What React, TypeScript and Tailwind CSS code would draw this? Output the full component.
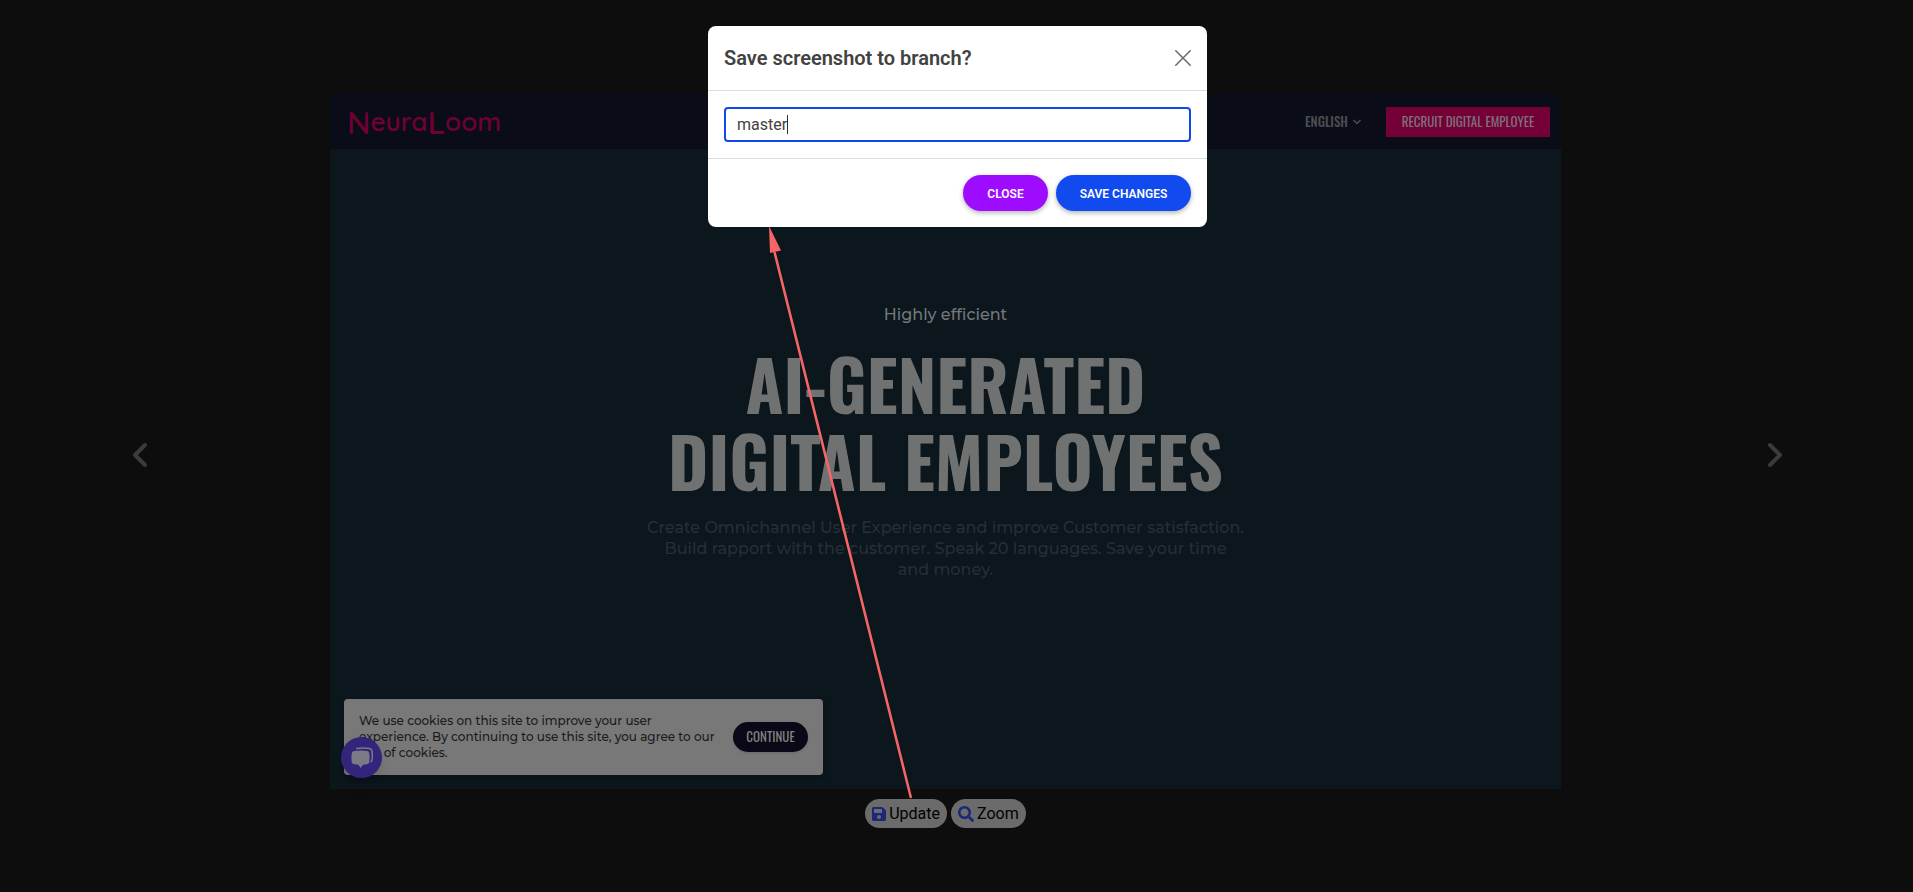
import { useState } from "react";

const montserrat = "font-[Montserrat,Inter,sans-serif]";
const oswald = "font-[Oswald,'Roboto_Condensed','Liberation_Sans_Narrow','Liberation_Sans',sans-serif]";

function Logo() {
  return (
    <a
      href="#home"
      aria-label="NeuraLoom"
      className="flex items-center font-[Quicksand,Comfortaa,Lato,sans-serif] text-[26px] leading-8 font-semibold text-[#6f0035]"
    >
      <span className="text-[32px]">N</span>
      <span>eura</span>
      <span className="text-[32px]">L</span>
      <span>oom</span>
    </a>
  );
}

function SiteHeader() {
  return (
    <header className="flex h-[55px] items-center justify-between bg-[#0a0d17] pr-[11px] pl-[17px]">
      <Logo />
      <div className={`flex items-center gap-6 text-[13px] ${oswald}`}>
        <button type="button" className="flex items-center gap-1 font-medium text-[#4b4c51]">
          ENGLISH
          <svg viewBox="0 0 10 10" className="size-[10px]" fill="none" stroke="currentColor" strokeWidth="1.5">
            <path d="M1.5 3l3.5 3.5L8.500 3" />
          </svg>
        </button>
        <button type="button" className="h-[30px] w-[164px] bg-[#730037] whitespace-nowrap text-[#80707a]">
          RECRUIT DIGITAL EMPLOYEE
        </button>
      </div>
    </header>
  );
}

function CookieNotice() {
  return (
    <div className="relative mb-[14px] ml-[14px] w-[479px]">
      <div className="flex h-[76px] items-center justify-between rounded bg-[#787878] pr-[15px] pl-[15px] shadow-md">
        <p className={`w-[362px] text-[12px] leading-4 font-medium text-[#1a1a1a] ${montserrat}`}>
          We use cookies on this site to improve your user experience. By continuing to use this site, you agree to our
          use of cookies.
        </p>
        <button
          type="button"
          className={`h-[30px] w-[75px] rounded-full bg-[#0a0817] text-[13px] text-[#828282] shadow ${oswald}`}
        >
          CONTINUE
        </button>
      </div>
      <button
        type="button"
        aria-label="Open chat"
        className="absolute -bottom-[3px] -left-[3px] flex size-[41px] items-center justify-center rounded-full bg-[#33247c] shadow-lg"
      >
        <svg viewBox="0 0 24 22" className="h-[22px] w-[24px]">
          <path d="M6 1.500Q14 .5 19.500 1.500Q21.500 2 22 4Q22.700 9 22 13Q21.500 14.500 20.500 15" fill="none" stroke="#7c7a86" strokeWidth="1.500" />
          <path d="M4 4Q11 3 17 4Q19 4.400 19.300 6.500Q19.800 11 19.300 15Q19 17 17 17.300L13 17.700L10.500 21L8.500 17.700L4 17.300Q2 17 1.700 15Q1.200 11 1.700 6.500Q2 4.400 4 4Z" fill="#7c7a86" />
        </svg>
      </button>
    </div>
  );
}

function SitePreview() {
  return (
    <article className="flex aspect-[1231/695] flex-col bg-[#0c161d]">
      <SiteHeader />
      <div className="flex flex-1 flex-col items-center pt-[154px] text-center">
        <p className={`text-base font-medium text-[#74787b] ${montserrat}`}>Highly efficient</p>
        <h1 className={`mt-[18px] text-[69px] leading-[77px] font-bold text-[#707272] ${oswald}`}>
          AI-GENERATED
          <br />
          DIGITAL EMPLOYEES
        </h1>
        <p className={`mt-[18px] w-[620px] text-base leading-[21px] font-medium text-[#252f36] ${montserrat}`}>
          Create Omnichannel User Experience and improve Customer satisfaction. Build rapport with the customer. Speak
          20 languages. Save your time
          <br />
          and money.
        </p>
      </div>
      <CookieNotice />
    </article>
  );
}

function Toolbar() {
  const style =
    "flex h-[29px] items-center gap-[3px] rounded-full bg-[#6b6b6b] px-[7px] font-[Roboto,sans-serif] text-base text-black";
  return (
    <div className="mt-[10px] flex justify-center gap-1">
      <button type="button" className={style}>
        <svg viewBox="0 0 448 512" className="h-4 w-[14px]" fill="#1b2877">
          <path d="M433.900 129.900l-83.900-83.900A48 48 0 0 0 316.100 32H48C21.500 32 0 53.500 0 80v352c0 26.500 21.500 48 48 48h352c26.500 0 48-21.500 48-48V163.900a48 48 0 0 0-14.100-34zM224 416c-35.300 0-64-28.700-64-64s28.700-64 64-64 64 28.700 64 64-28.700 64-64 64zm96-304.500V212c0 6.600-5.400 12-12 12H76c-6.600 0-12-5.400-12-12V108c0-6.600 5.400-12 12-12h228.500c3.200 0 6.200 1.300 8.500 3.500l3.500 3.500a12 12 0 0 1 3.500 8.500z" />
        </svg>
        Update
      </button>
      <button type="button" className={style}>
        <svg viewBox="0 0 512 512" className="size-4" fill="#1b2877">
          <path d="M505 442.700L405.300 343c-4.500-4.500-10.600-7-17-7H372c27.600-35.300 44-79.700 44-128C416 93.100 322.900 0 208 0S0 93.100 0 208s93.100 208 208 208c48.300 0 92.700-16.400 128-44v16.300c0 6.400 2.500 12.500 7 17l99.700 99.700c9.400 9.400 24.600 9.400 33.900 0l28.300-28.300c9.400-9.400 9.400-24.600.1-34zM208 336c-70.700 0-128-57.200-128-128 0-70.700 57.200-128 128-128 70.700 0 128 57.200 128 128 0 70.700-57.200 128-128 128z" />
        </svg>
        Zoom
      </button>
    </div>
  );
}

function SlideButton({ label, path }: { label: string; path: string }) {
  return (
    <button type="button" aria-label={label} className="pb-3">
      <svg viewBox="0 0 16 26" className="h-[26px] w-4" fill="none" stroke="#3b3b3b" strokeWidth="4" strokeLinecap="round" strokeLinejoin="round">
        <path d={path} />
      </svg>
    </button>
  );
}

function SaveDialog() {
  const [branch, setBranch] = useState("master");
  const pill =
    "h-9 rounded-full pt-0.5 text-[12px] font-semibold text-white shadow-[0_2px_5px_rgba(0,0,0,0.3)]";
  return (
    <div className="absolute inset-x-0 top-[26px] flex justify-center pl-0.5">
      <form
        role="dialog"
        aria-labelledby="dialog-title"
        onSubmit={(e) => e.preventDefault()}
        className="w-[499px] rounded-lg bg-white font-[Roboto,sans-serif] text-[#424242]"
      >
        <div className="flex h-[65px] items-center justify-between border-b border-[#dcdcdc] px-4">
          <h2 id="dialog-title" className="text-xl font-semibold">
            <label htmlFor="branch">Save screenshot to branch?</label>
          </h2>
          <button type="button" aria-label="Close dialog">
            <svg viewBox="0 0 16 16" className="size-4" fill="none" stroke="#686868" strokeWidth="1.500" strokeLinecap="round">
              <path d="M.8.8l14.400 14.400M15.200.8L.8 15.200" />
            </svg>
          </button>
        </div>
        <div className="border-b border-[#dcdcdc] p-4">
          <div className="relative flex items-center">
            <input
              id="branch"
              type="text"
              value={branch}
              onChange={(e) => setBranch(e.target.value)}
              className="h-[35px] w-full rounded border-2 border-[#1049ea] px-[11px] text-base outline-none"
            />
            <span aria-hidden="true" className="pointer-events-none absolute left-[63px] h-[19px] w-px bg-[#303030]" />
          </div>
        </div>
        <div className="flex justify-end gap-2 p-4">
          <button type="button" className={`${pill} w-[85px] bg-[#9d0cff]`}>
            CLOSE
          </button>
          <button type="submit" className={`${pill} w-[135px] bg-[#114aee]`}>
            SAVE CHANGES
          </button>
        </div>
      </form>
    </div>
  );
}

function Pointer() {
  return (
    <svg
      viewBox="0 0 150 574"
      aria-hidden="true"
      className="pointer-events-none absolute top-[226px] left-1/2 -ml-[191px] h-[574px] w-[150px]"
    >
      <path d="M8.500 26L145 572" stroke="#f76567" strokeWidth="2.500" />
      <path d="M3 0L4 27L15 24.500Z" fill="#f76567" />
    </svg>
  );
}

export default function App() {
  return (
    <div className="relative min-h-screen bg-[#0d0d0d]">
      <main className="flex items-center justify-between pt-[94px] pr-[130px] pb-8 pl-[132px]">
        <SlideButton label="Previous" path="M13 3L3 13l10 10" />
        <div className="mr-6 w-[1231px] max-w-[75%]">
          <SitePreview />
          <Toolbar />
        </div>
        <SlideButton label="Next" path="M3 3l10 10L3 23" />
      </main>
      <Pointer />
      <SaveDialog />
    </div>
  );
}
